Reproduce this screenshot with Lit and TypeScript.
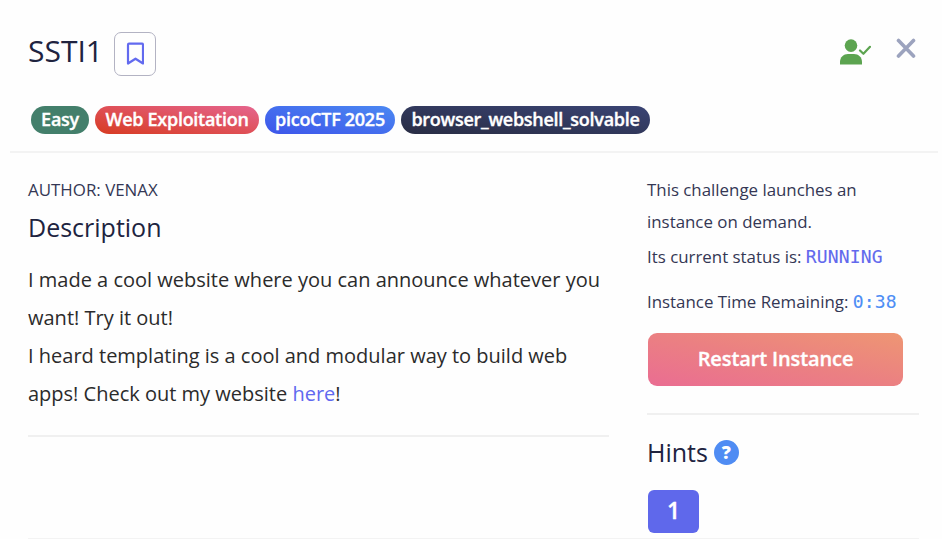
import { LitElement, html, css } from "lit";
import { customElement } from "lit/decorators.js";

const tags = [
  { label: "Easy", kind: "easy" },
  { label: "Web Exploitation", kind: "web" },
  { label: "picoCTF 2025", kind: "event" },
  { label: "browser_webshell_solvable", kind: "shell" },
];

@customElement("app-root")
export class AppRoot extends LitElement {
  static styles = css`
    :host { display: block; height: 539px; overflow: hidden; background: #fefefe; color: #20233f;
      font-family: "Open Sans", sans-serif; }
    * { box-sizing: border-box; }
    svg { display: block; }
    button { font-family: inherit; padding: 0; margin: 0; border: 0; background: none; }
    h1, h2, p { margin: 0; font-weight: 400; }
    .header { height: 153px; margin: 0 4px 0 10px; padding: 32px 22px 0 18px; border-bottom: 2px solid #f3f3f3; }
    .top { display: flex; height: 44px; align-items: flex-start; }
    h1 { font-size: 30px; line-height: 38px; width: 86px; white-space: nowrap; }
    .mark { width: 42px; height: 44px; border: 1px solid #b3b3c3; border-radius: 7px; display: flex;
      align-items: center; justify-content: center; }
    .actions { margin-left: auto; display: flex; }
    .user { margin: 7px 25px 0 0; }
    .close { margin-top: 6px; }
    .tags { display: flex; gap: 6px; margin: 30px 0 0 3px; }
    .tag { height: 28px; border-radius: 14px; color: #fff; font-size: 18px; line-height: 27px;
      font-weight: 600; letter-spacing: -.28px; -webkit-text-stroke: .35px currentColor; white-space: nowrap; text-align: center; }
    .easy { width: 58px; background: #437f6b; }
    .web { width: 164px; background: linear-gradient(to top right, #d73b22, #df5057 50%, #e5658f); }
    .event { width: 130px; background: linear-gradient(to top right, #3d55ea, #4b88f2); }
    .shell { width: 249px; background: linear-gradient(to top right, #292d44, #3a4474); }
    .body { display: grid; grid-template-columns: 581px 272px; column-gap: 38px; margin-left: 28px; width: 891px;
      height: 386px; border-bottom: 1px solid #f3f3f3; }
    .left { height: 284px; border-bottom: 2px solid #f0f0f0; padding-top: 21px; }
    .author { font-size: 16.9px; line-height: 32px; color: #343754; }
    h2 { font-size: 25px; line-height: 34px; white-space: nowrap; }
    .left h2 { margin-top: 4px; }
    .text { margin-top: 17px; font-size: 20px; line-height: 38px; color: #2b2b2b; white-space: nowrap; }
    .text a { color: #6068ef; text-decoration: none; }
    .status { padding-top: 21px; height: 262px; border-bottom: 2px solid #f0f0f0; font-size: 16.88px; line-height: 32px;
      color: #343754; white-space: nowrap; }
    .state { margin-top: 3px; }
    .time { margin-top: 13px; }
    .mono { font-family: "DejaVu Sans Mono", monospace; font-size: 18px; letter-spacing: .16px; color: #6269ed;
      line-height: 1; -webkit-text-stroke: .1px currentColor; }
    .time .mono { color: #4d8df5; }
    .restart { display: block; margin: 15px 0 0 1px; width: 255px; height: 53px; border-radius: 9px; color: #fff;
      font-size: 20px; font-weight: 600; letter-spacing: -.12px; -webkit-text-stroke: .35px currentColor; line-height: 49px; padding-bottom: 3px;
      background: linear-gradient(to top right, #ea6d92, #eb8082 50%, #ee9673); }
    .hints { display: flex; align-items: center; gap: 6px; margin-top: 20px; height: 36px; }
    .hints h2 { line-height: 36px; margin-top: -2px; }
    .help { width: 25px; height: 25px; margin-top: -1px; border-radius: 50%; background: #4f8cf3; color: #fff; font-size: 18px;
      line-height: 24px; font-weight: 800; text-align: center; }
    .hint { display: block; width: 51px; height: 43px; margin: 19px 0 0 1px; border-radius: 6px; background: #5f68eb; color: #fff;
      font-size: 23px; font-weight: 600; -webkit-text-stroke: .35px currentColor; line-height: 39px; padding-bottom: 3px; }
  `;

  render() {
    return html`
      <header class="header">
        <div class="top">
          <h1>SSTI1</h1>
          <button class="mark" aria-label="Bookmark">
            <svg width="18" height="24" viewBox="0 0 18 24" fill="none" stroke="#626aef" stroke-width="2.2" stroke-linejoin="round">
              <path d="M2 21.500V2.700Q2 1.700 3 1.700H16Q17 1.700 17 2.700V21.500L9.500 16.700Z" />
            </svg>
          </button>
          <div class="actions">
            <svg class="user" width="31" height="26" viewBox="0 0 31 26">
              <circle cx="11" cy="6.6" r="6.3" fill="#5ca450" />
              <path d="M0 25.4V23C0 18 3.6 15 8 15H14C18.400 15 22 18 22 23V25.400Z" fill="#5ca450" />
              <path d="M20 11.500L23.400 14.800L30 7.800" fill="none" stroke="#5ca450" stroke-width="2.2" stroke-linecap="round" stroke-linejoin="round" />
            </svg>
            <svg class="close" width="20" height="20" viewBox="0 0 20 20">
              <path d="M2.500 2.500L17.500 18M17.500 2.500L2.500 18" stroke="#9ca3be" stroke-width="3.600" stroke-linecap="round" />
            </svg>
          </div>
        </div>
        <div class="tags">${tags.map((t) => html`<span class="tag ${t.kind}">${t.label}</span>`)}</div>
      </header>
      <main class="body">
        <section class="left">
          <p class="author">AUTHOR: VENAX</p>
          <h2>Description</h2>
          <p class="text">I made a cool website where you can announce whatever you<br />want! Try it out!<br />I heard templating is a cool and modular way to build web<br />apps! Check out my website <a>here</a>!</p>
        </section>
        <aside>
          <div class="status">
            <p>This challenge launches an<br />instance on demand.</p>
            <p class="state">Its current status is: <span class="mono">RUNNING</span></p>
            <p class="time">Instance Time Remaining: <span class="mono">0:38</span></p>
            <button class="restart">Restart Instance</button>
          </div>
          <div class="hints"><h2>Hints</h2><span class="help">?</span></div>
          <button class="hint">1</button>
        </aside>
      </main>
    `;
  }
}
